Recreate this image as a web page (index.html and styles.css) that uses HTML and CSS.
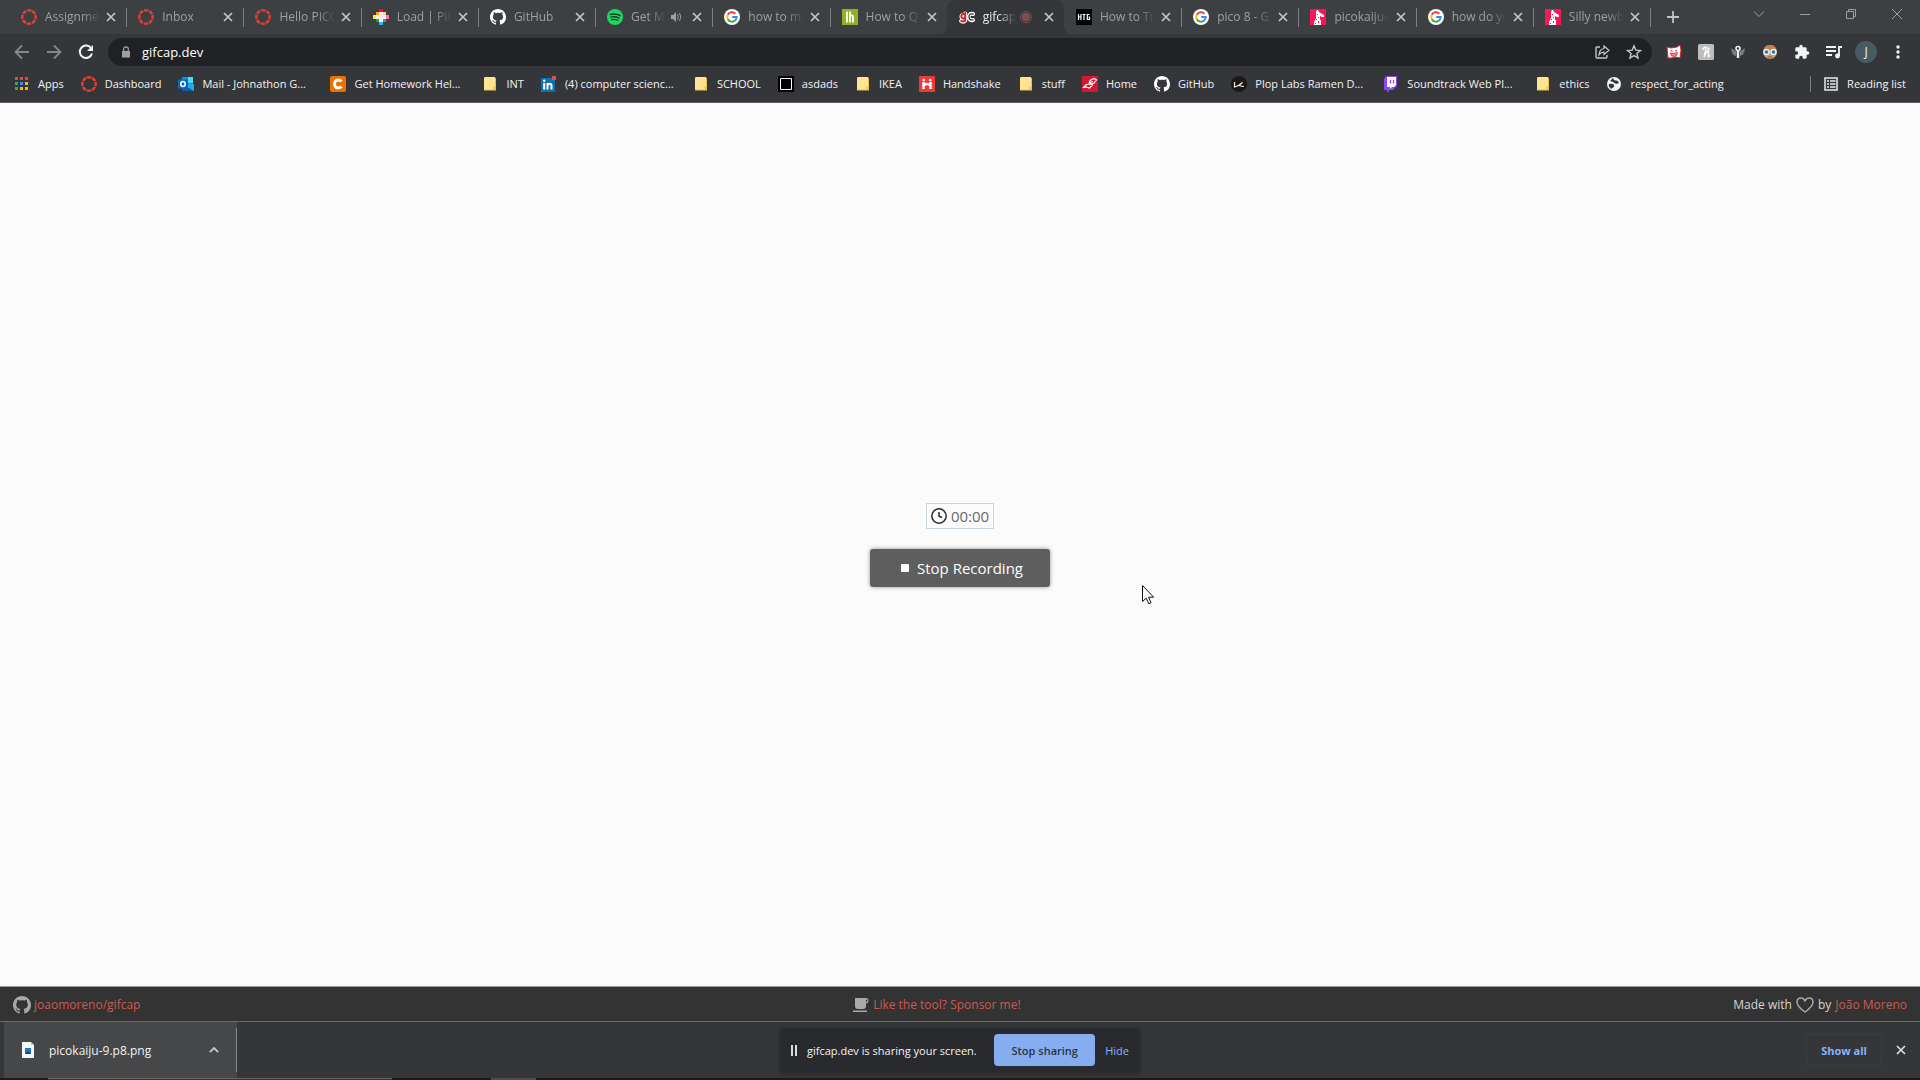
FILE: index.html
```html
<!DOCTYPE html>
<html lang="en">
<head>
<meta charset="utf-8">
<title>gifcap</title>
<link rel="stylesheet" href="styles.css">
</head>
<body>
<svg class="sprite" aria-hidden="true">
  <symbol id="close" viewBox="0 0 10 10"><path d="M1 1l8 8M9 1L1 9" stroke="currentColor" stroke-width="1.7" fill="none"/></symbol>
  <symbol id="canvas" viewBox="0 0 16 16"><circle cx="8" cy="8" r="6.7" fill="none" stroke="#e23f33" stroke-width="2.5" stroke-dasharray="4.3 .96" stroke-dashoffset="2.1"/></symbol>
  <symbol id="github" viewBox="0 0 16 16"><path fill="currentColor" d="M8 0C3.58 0 0 3.58 0 8c0 3.54 2.29 6.53 5.47 7.59.4.07.55-.17.55-.38 0-.19-.01-.82-.01-1.49-2.01.37-2.53-.49-2.69-.94-.09-.23-.48-.94-.82-1.13-.28-.15-.68-.52-.01-.53.63-.01 1.08.58 1.23.82.72 1.21 1.87.87 2.33.66.07-.52.28-.87.51-1.07-1.78-.2-3.64-.89-3.64-3.95 0-.87.31-1.59.82-2.15-.08-.2-.36-1.02.08-2.12 0 0 .67-.21 2.2.82.64-.18 1.32-.27 2-.27s1.36.09 2 .27c1.53-1.04 2.2-.82 2.2-.82.44 1.1.16 1.92.08 2.12.51.56.82 1.27.82 2.15 0 3.07-1.87 3.75-3.65 3.95.29.25.54.73.54 1.48 0 1.07-.01 1.93-.01 2.2 0 .21.15.46.55.38A8.01 8.01 0 0016 8c0-4.42-3.58-8-8-8z"/></symbol>
  <symbol id="google" viewBox="0 0 16 16"><circle cx="8" cy="8" r="8" fill="#fff"/><g fill="none" stroke-width="2"><path d="M11.4 4.7A4.8 4.8 0 0 0 3.8 5.7" stroke="#ea4335"/><path d="M3.8 5.7a4.8 4.8 0 0 0 0 4.6" stroke="#fbbc05"/><path d="M3.8 10.3a4.8 4.8 0 0 0 7.3 1.2" stroke="#34a853"/><path d="M11.1 11.5A4.8 4.8 0 0 0 12.7 8H8.2" stroke="#4285f4"/></g></symbol>
  <symbol id="giraffe" viewBox="0 0 16 16"><path fill="#fa1556" d="M0 0h16v16H0z"/><path fill="#fff" d="M7 1h1l1 2 3 2 2 1v2h-2l-2-1v3l1 2v4H4v-3l2-4V3z"/><path fill="#fa1556" d="M7 5h1v1H7zM8 8h1v1H8zM6 10h1v1H6zM8 12h1v2H8zM5 14h1v1H5z"/></symbol>
  <symbol id="folder" viewBox="0 0 16 16"><path d="M2 2q0-1 1-1h10v9h1v4H2z" fill="#ffe591"/><path d="M2 13.5h9.500V10.500H13V2l1-.2V14.500H2z" fill="#e9c14c"/></symbol>
</svg>

<div class="browser">
  <header class="tabstrip">
    <nav class="tabs" aria-label="Tabs">
      <div class="tab"><svg class="icon"><use href="#canvas"/></svg><a href="#">Assignmen</a><button class="x" aria-label="Close tab"><svg><use href="#close"/></svg></button></div>
      <div class="tab"><svg class="icon"><use href="#canvas"/></svg><a href="#">Inbox</a><button class="x" aria-label="Close tab"><svg><use href="#close"/></svg></button></div>
      <div class="tab"><svg class="icon"><use href="#canvas"/></svg><a href="#">Hello PICO</a><button class="x" aria-label="Close tab"><svg><use href="#close"/></svg></button></div>
      <div class="tab"><svg class="icon" viewBox="0 0 16 16"><path fill="#fff1e8" d="M5 3h6v2h2v6h-2v2H5v-2H3V5h2z"/><path fill="#ff004d" d="M6 0h4v3H6z"/><path fill="#ffa300" d="M3 3h3v3H3z"/><path fill="#ffec27" d="M0 6h3v4H0z"/><path fill="#00b050" d="M3 10h3v3H3z"/><path fill="#29adff" d="M6 13h4v3H6z"/><path fill="#83769c" d="M10 10h3v3h-3z"/><path fill="#ff77a8" d="M13 6h3v4h-3z"/><path fill="#ffccaa" d="M10 3h3v3h-3z"/></svg><a href="#">Load | PIC</a><button class="x" aria-label="Close tab"><svg><use href="#close"/></svg></button></div>
      <div class="tab"><svg class="icon white"><use href="#github"/></svg><a href="#">GitHub</a><button class="x" aria-label="Close tab"><svg><use href="#close"/></svg></button></div>
      <div class="tab"><svg class="icon" viewBox="0 0 16 16"><circle cx="8" cy="8" r="8" fill="#1ed760"/><g fill="none" stroke="#26352c" stroke-linecap="round"><path d="M3.300 5.500q5-1.500 9.600 1" stroke-width="1.600"/><path d="M3.800 8.200q4.500-1.200 8.200.9" stroke-width="1.300"/><path d="M4.200 10.700q3.700-.9 6.800.8" stroke-width="1.100"/></g></svg><a href="#">Get M</a><svg class="audio" viewBox="0 0 12 12"><path d="M1 4h2l3-3v10L3 8H1z" fill="currentColor"/><path d="M7.500 3.500q1.500 2.500 0 5M9.500 2q2.500 4 0 8" stroke="currentColor" fill="none"/></svg><button class="x" aria-label="Close tab"><svg><use href="#close"/></svg></button></div>
      <div class="tab"><svg class="icon"><use href="#google"/></svg><a href="#">how to ma</a><button class="x" aria-label="Close tab"><svg><use href="#close"/></svg></button></div>
      <div class="tab last-before"><svg class="icon" viewBox="0 0 16 16"><path fill="#93b023" d="M0 0h16v16H0z"/><path d="M5 2.500v11M8 2.500v11M8 7.500q0-1 1.500-1t1.500 1v6" stroke="#fff" stroke-width="1.800" fill="none"/></svg><a href="#">How to Q</a><button class="x" aria-label="Close tab"><svg><use href="#close"/></svg></button></div>
      <div class="tab active"><svg class="icon" viewBox="0 0 16 16"><g fill="none" stroke-linecap="round"><g stroke="#fff" stroke-width="4"><path d="M6 6.500a2 2 0 1 0 0 2.500M6.200 4.500v7q-1.500 2-4 .5M14 5q-4-1-4 3t4 3"/></g><path d="M6 6a2 2.200 0 1 0 0 2.500M6.200 4v7.500q-1.500 1.500-4 .5" stroke="#c22a2a" stroke-width="2"/><path d="M14 5q-4-1-4 2.800t4 3M12 8h2" stroke="#333" stroke-width="1.300"/></g></svg><a href="#">gifcap</a><svg class="rec" viewBox="0 0 12 12"><circle cx="6" cy="6" r="5.500" fill="none" stroke="#79504f" stroke-width="1"/><circle cx="6" cy="6" r="4.200" fill="#79504f"/></svg><button class="x" aria-label="Close tab"><svg><use href="#close"/></svg></button></div>
      <div class="tab"><svg class="icon" viewBox="0 0 16 16"><path d="M0 0h16v16H0z"/><path d="M2.500 5v6M5 5v6M2.500 8H5M6.500 5.500h3M8 5.500V11M13.500 5.500h-2.200v5h2.200V8H12.500" stroke="#fff" stroke-width="1.200" fill="none"/></svg><a href="#">How to Tu</a><button class="x" aria-label="Close tab"><svg><use href="#close"/></svg></button></div>
      <div class="tab"><svg class="icon"><use href="#google"/></svg><a href="#">pico 8 - G</a><button class="x" aria-label="Close tab"><svg><use href="#close"/></svg></button></div>
      <div class="tab"><svg class="icon"><use href="#giraffe"/></svg><a href="#">picokaiju-</a><button class="x" aria-label="Close tab"><svg><use href="#close"/></svg></button></div>
      <div class="tab"><svg class="icon"><use href="#google"/></svg><a href="#">how do yo</a><button class="x" aria-label="Close tab"><svg><use href="#close"/></svg></button></div>
      <div class="tab"><svg class="icon"><use href="#giraffe"/></svg><a href="#">Silly newb</a><button class="x" aria-label="Close tab"><svg><use href="#close"/></svg></button></div>
    </nav>
    <button class="new-tab" aria-label="New tab"><svg viewBox="0 0 12 12"><path d="M6 0v12M0 6h12" stroke="currentColor" stroke-width="1.800"/></svg></button>
    <div class="window-buttons">
      <button aria-label="Search tabs"><svg viewBox="0 0 12 12"><path d="M1 3.500l5 5 5-5" stroke="currentColor" fill="none"/></svg></button>
      <button aria-label="Minimize"><svg viewBox="0 0 12 12"><path d="M1 6.500h10" stroke="currentColor"/></svg></button>
      <button aria-label="Restore"><svg viewBox="0 0 12 12"><path d="M1.500 3.500h7v7h-7zM3.500 3.500v-2h7v7h-2" stroke="currentColor" fill="none"/></svg></button>
      <button aria-label="Close window"><svg viewBox="0 0 12 12"><path d="M1 1l10 10M11 1L1 11" stroke="currentColor"/></svg></button>
    </div>
  </header>

  <div class="toolbar">
    <button class="tool dim" aria-label="Back"><svg viewBox="0 0 16 16"><path d="M15 8H2M8 1.500L1.500 8 8 14.500" stroke="currentColor" stroke-width="1.800" fill="none"/></svg></button>
    <button class="tool dim" aria-label="Forward"><svg viewBox="0 0 16 16"><path d="M1 8h13M8 1.500L14.500 8 8 14.500" stroke="currentColor" stroke-width="1.800" fill="none"/></svg></button>
    <button class="tool" aria-label="Reload"><svg viewBox="0 0 16 16"><path d="M13.300 4.500A6.200 6.200 0 1 0 14 9.500" stroke="currentColor" stroke-width="2" fill="none"/><path d="M15 1v6H9z" fill="currentColor"/></svg></button>
    <div class="omnibox">
      <svg class="lock" viewBox="0 0 10 12"><path d="M1 5h8v6.500H1z" fill="currentColor"/><path d="M2.700 5V3q0-2 2.300-2t2.300 2v2" stroke="currentColor" stroke-width="1.300" fill="none"/></svg>
      <input type="text" value="gifcap.dev" aria-label="Address">
      <button class="tool light" aria-label="Share"><svg viewBox="0 0 16 16"><path d="M6 3H3Q2 3 2 4v9q0 1 1 1h9q1 0 1-1v-2" stroke="currentColor" stroke-width="1.400" fill="none"/><path d="M10 2l5 4.200-5 4.200V8Q7 8 5 10.800 5.500 5 10 4.500z" stroke="currentColor" stroke-width="1.200" fill="none"/></svg></button>
      <button class="tool light" aria-label="Bookmark this tab"><svg viewBox="0 0 16 16"><path d="M8 1.800l1.800 4.300 4.700.4-3.600 3 1.100 4.600-4-2.500-4 2.500 1.100-4.600-3.600-3 4.700-.4z" stroke="currentColor" stroke-width="1.400" fill="none"/></svg></button>
    </div>
    <button class="tool" aria-label="Comics extension"><svg viewBox="0 0 16 16"><path d="M1 3l4 1 6-1 3-2 1 5-1 8-4-1-5 1H2z" fill="#fff" stroke="#d5232b"/><path d="M4.500 6.500l2 .5M9 7l2-.5" stroke="#d5232b"/><path d="M4 9q4 1 7.500-.5-.5 4-3.500 4T4 9z" fill="#e88" stroke="#d5232b" stroke-width=".8"/></svg></button>
    <button class="tool" aria-label="Honey"><svg viewBox="0 0 16 16"><rect width="16" height="16" rx="1.500" fill="#bdbdbd"/><path d="M4.500 6q1.500-3 3-3 1 0 0 4l-1.500 6Q8.500 7 10 8t0 4q.5 1 2-.5M9 4.500Q11 3 11 5T8.500 7.500" stroke="#fff" stroke-width="1.300" fill="none"/></svg></button>
    <button class="tool" aria-label="Wings extension"><svg viewBox="0 0 16 16"><path d="M1 4l5 3v5Q1 11 1 4zM15 4l-5 3v5q5-1 5-8z" fill="#66686a"/><path d="M2 6l4 3M14 6l-4 3M3 9l3 2M13 9l-3 2" stroke="#999"/><circle cx="8" cy="4.500" r="2" stroke="#eee" stroke-width="1.600" fill="none"/><path d="M8 6v8" stroke="#eee" stroke-width="2.500"/></svg></button>
    <button class="tool" aria-label="Goggles extension"><svg viewBox="0 0 16 16"><circle cx="8" cy="8" r="7" fill="#c89a6b"/><path d="M2 5q1-4 6-4t6 4l-3 1H5z" fill="#bd8550"/><circle cx="4.500" cy="8" r="2.500" fill="#446f9c" stroke="#e8edf0" stroke-width="1.400"/><circle cx="11.500" cy="8" r="2.500" fill="#446f9c" stroke="#e8edf0" stroke-width="1.400"/><path d="M6 13h4" stroke="#8a6045"/></svg></button>
    <button class="tool" aria-label="Extensions"><svg viewBox="0 0 24 24"><path fill="currentColor" d="M20.500 11H19V7c0-1.100-.9-2-2-2h-4V3.500a2.500 2.500 0 0 0-5 0V5H4c-1.100 0-2 .9-2 2v3.800h1.500a2.700 2.700 0 0 1 0 5.400H2V20c0 1.100.9 2 2 2h3.800v-1.500a2.700 2.700 0 0 1 5.400 0V22H17c1.100 0 2-.9 2-2v-4h1.500a2.500 2.500 0 0 0 0-5z"/></svg></button>
    <button class="tool" aria-label="Media control"><svg viewBox="0 0 16 16"><path d="M0 3h10M0 7h10M0 11h6M13 12V3h3" stroke="currentColor" stroke-width="1.800" fill="none"/><circle cx="11.500" cy="12" r="2.400" fill="currentColor"/></svg></button>
    <button class="tool" aria-label="Profile"><span class="avatar">J</span></button>
    <button class="tool" aria-label="Menu"><svg viewBox="0 0 16 16"><g fill="currentColor"><circle cx="8" cy="3" r="1.700"/><circle cx="8" cy="8" r="1.700"/><circle cx="8" cy="13" r="1.700"/></g></svg></button>
  </div>

  <nav class="bookmarks" aria-label="Bookmarks">
    <a href="#"><svg class="icon" viewBox="0 0 16 16"><path fill="#e8453c" d="M1 1h3v3H1zM6 1h3v3H6zM11 1h3v3h-3z"/><path fill="#34a853" d="M1 6h3v3H1zM1 11h3v3H1z"/><path fill="#4285f4" d="M6 6h3v3H6z"/><path fill="#fbbc05" d="M11 6h3v3h-3zM6 11h3v3H6zM11 11h3v3h-3z"/></svg>Apps</a>
    <a href="#"><svg class="icon"><use href="#canvas"/></svg>Dashboard</a>
    <a href="#" class="long"><svg class="icon" viewBox="0 0 16 16"><path fill="#1490df" d="M4 1h11v7H4z"/><path fill="#50d9ff" d="M10 1h5v6h-5z"/><path fill="#28a8ea" d="M4 8h12v7H4z"/><path fill="#0f5fa8" d="M4 8l12 7H4z"/><path fill="#0a66b7" d="M0 3.500h10v9H0z"/><ellipse cx="5" cy="8" rx="2.200" ry="2.500" stroke="#fff" stroke-width="1.500" fill="none"/></svg>Mail - Johnathon G...</a>
    <a href="#" class="long"><svg class="icon" viewBox="0 0 16 16"><rect width="16" height="16" rx="2" fill="#eb7100"/><path d="M11.500 5.500Q10.500 4 8.200 4 4.500 4.200 4.500 8t3.700 4q2.300 0 3.300-1.500" stroke="#fff" stroke-width="2.800" fill="none"/></svg>Get Homework Hel...</a>
    <a href="#"><svg class="icon"><use href="#folder"/></svg>INT</a>
    <a href="#" class="long"><svg class="icon" viewBox="0 0 16 16"><path fill="#0a72b1" d="M0 2h14v14H0z"/><path d="M3.200 7v6.500M6.500 7v6.500M6.500 10q0-2.300 2-2.300t2 2.300v3.500" stroke="#fff" stroke-width="2" fill="none"/><circle cx="3.200" cy="4.700" r="1.200" fill="#fff"/><path fill="#f04a3e" d="M11 0h4v4h-4z"/></svg>(4) computer scienc...</a>
    <a href="#"><svg class="icon"><use href="#folder"/></svg>SCHOOL</a>
    <a href="#"><svg class="icon" viewBox="0 0 16 16"><path d="M0 0h16v16H0z"/><path d="M2.500 2.500h11v11h-11z" stroke="#fff" fill="none"/></svg>asdads</a>
    <a href="#"><svg class="icon"><use href="#folder"/></svg>IKEA</a>
    <a href="#"><svg class="icon" viewBox="0 0 16 16"><rect width="16" height="16" rx="1" fill="#ef3b34"/><path d="M4.500 6v7M11.500 6v7M4.500 9.500q3.500-3 7 0" stroke="#fff" stroke-width="2.400" fill="none"/><circle cx="4.800" cy="4" r="1.300" fill="#fff"/><circle cx="11.200" cy="4" r="1.300" fill="#fff"/></svg>Handshake</a>
    <a href="#"><svg class="icon"><use href="#folder"/></svg>stuff</a>
    <a href="#"><svg class="icon" viewBox="0 0 16 16"><path fill="#d5182f" d="M0 0h16v16H0z"/><path d="M1.500 11.500l3-3 4-.5 2 1-3 3-3-1zM7 7.500l1-3 4-2 2.500 1.500L12 7l-3 1-1-1.500 3-1" stroke="#fff" stroke-width="1.100" fill="none"/></svg>Home</a>
    <a href="#"><svg class="icon white"><use href="#github"/></svg>GitHub</a>
    <a href="#" class="long"><svg class="icon" viewBox="0 0 16 16"><circle cx="8" cy="8" r="8" fill="#1d1714"/><path d="M3.500 6v5q4-.5 8-4.500M8.500 9.500q2 1 4.500 1" stroke="#f0eeee" stroke-width="1.200" fill="none"/></svg>Plop Labs Ramen D...</a>
    <a href="#" class="long"><svg class="icon" viewBox="0 0 16 16"><path fill="#8b45f5" d="M1 3l2-3h11v10l-4 4H7l-2 2H4v-2H1z"/><path fill="#fff" d="M4 1h9v8l-2 2H9l-2 2v-2H4z"/><path d="M7.500 4v3.500M10.500 4v3.500" stroke="#8b45f5" stroke-width="1.300"/></svg>Soundtrack Web Pl...</a>
    <a href="#"><svg class="icon"><use href="#folder"/></svg>ethics</a>
    <a href="#"><svg class="icon" viewBox="0 0 16 16"><circle cx="8" cy="8" r="7" fill="#f1f3f4"/><path d="M3 8q4-1 5 1t-2 3l-1 1Q2 10 3 8zM7 2q1 3 3 2.500T13 7l-3 1-3-2-3-1z" fill="#35363a"/></svg>respect_for_acting</a>
    <a href="#" class="reading"><svg class="icon" viewBox="0 0 16 16"><path d="M2 2h12v12H2zM4 5h2M7 5h5.500M4 8h2M7 8h5.500M4 11h2M7 11h5.500" stroke="#e8eaed" stroke-width="1.500" fill="none"/></svg>Reading list</a>
  </nav>

  <main class="page">
    <div class="timer"><svg viewBox="0 0 16 16"><circle cx="8" cy="8" r="7.200" stroke="#24292e" stroke-width="1.500" fill="none"/><path d="M8 4v4.300l3 1.200" stroke="#24292e" stroke-width="1.500" fill="none"/></svg>00:00</div>
    <button class="stop"><span class="square"></span>Stop Recording</button>
  </main>

  <footer class="credits">
    <div><a href="#"><svg class="mark" viewBox="0 0 16 16"><use href="#github"/></svg>joaomoreno/gifcap</a></div>
    <div><a href="#" class="sponsor"><svg class="cup" viewBox="0 0 16 16"><path d="M2 1h11q2.500 0 2.500 2.500T13 6.500V9q0 3-3 3H5q-3 0-3-3zM13 2.500V5q1.200 0 1.200-1.200T13 2.500zM0 13.500h14V15H0z" fill="#a9a9a9" fill-rule="evenodd"/></svg>Like the tool? Sponsor me!</a></div>
    <div>Made with <svg class="heart" viewBox="0 0 18 16"><path d="M9 15Q1 9.500 1 5q0-4 4-4 2.500 0 4 2.800Q10.500 1 13 1q4 0 4 4 0 4.500-8 10z" stroke="#a9a9a9" stroke-width="1.500" fill="none"/></svg> by <a href="#">João Moreno</a></div>
  </footer>

  <section class="downloads" aria-label="Downloads">
    <div class="download">
      <svg class="file" viewBox="0 0 12 16"><path d="M0 0h9l3 3v13H0z" fill="#f4f6f8"/><path d="M9 0v3h3" fill="#b8bcc0"/><path d="M3 6h6v6H3z" fill="#2277c4"/><path d="M3 12l3-3 3 3z" fill="#123e70"/></svg>
      <a href="#">picokaiju-9.p8.png</a>
      <button aria-label="Download options"><svg viewBox="0 0 10 6"><path d="M.800 5.200L5 1l4.200 4.200" stroke="currentColor" stroke-width="1.800" fill="none"/></svg></button>
    </div>
    <button class="show-all">Show all</button>
    <button class="x bar-close" aria-label="Close downloads"><svg><use href="#close"/></svg></button>
  </section>
  <div class="taskbar"><span class="task-search"></span><span class="task-item"></span></div>

  <div class="sharing" role="status">
    <svg viewBox="0 0 6 11"><path d="M0 0h2v11H0zM4 0h2v11H4z" fill="#dadce0"/></svg>
    <span>gifcap.dev is sharing your screen.</span>
    <button class="stop-sharing">Stop sharing</button>
    <button class="hide">Hide</button>
  </div>
  <svg class="cursor" viewBox="0 0 13 20"><path d="M.500.500v16l3.700-3.400 2.600 5.700 2.300-1-2.600-5.600h5.200z" fill="#fff" stroke="#111"/></svg>
</div>
</body>
</html>
```
FILE: styles.css
```css
* { box-sizing: border-box; }
body {
  margin: 0;
  font-family: "Open Sans", "Noto Sans", sans-serif;
  font-size: 11px;
  color: #f1f3f4;
}
a { color: inherit; text-decoration: none; }
button {
  display: flex;
  align-items: center;
  justify-content: center;
  padding: 0;
  border: 0;
  background: none;
  color: inherit;
  font: inherit;
}
svg { display: block; flex: none; }
.sprite { position: absolute; width: 0; height: 0; }
.icon { width: 16px; height: 16px; }
.white { color: #fff; }

.browser {
  position: relative;
  display: flex;
  flex-direction: column;
  min-height: 100vh;
  overflow: hidden;
  background: #35363a;
}

/* Tab strip */
.tabstrip { display: flex; height: 34px; background: #3c4043; color: #9aa0a6; }
.tabs { display: flex; flex: 1; min-width: 0; padding-left: 9px; }
.tab {
  position: relative;
  display: flex;
  flex: 1 1 0;
  align-items: center;
  min-width: 0;
  padding: 0 8px 0 12px;
}
.tab::after {
  content: "";
  position: absolute;
  right: -1px;
  top: 8px;
  width: 1px;
  height: 19px;
  background: #7b7f83;
}
.tab.active::after, .tab.last-before::after { display: none; }
.tab a {
  flex: 1;
  min-width: 0;
  margin: 0 4px 0 8px;
  overflow: hidden;
  white-space: nowrap;
  font-size: 12px;
  line-height: 18px;
  -webkit-mask-image: linear-gradient(to left, transparent, #000 18px);
  mask-image: linear-gradient(to left, transparent, #000 18px);
}
.x { width: 14px; height: 16px; color: #c3c6ca; }
.x svg { width: 10px; height: 10px; }
.audio { width: 12px; height: 12px; margin-right: 8px; }
.rec { width: 12px; height: 12px; margin-right: 10px; }
.tab.active { background: #35363a; border-radius: 8px 8px 0 0; color: #e8eaed; }
.tab.active::before {
  content: "";
  position: absolute;
  left: -8px;
  right: -8px;
  bottom: 0;
  height: 8px;
  background:
    radial-gradient(circle at 0 0, transparent 8px, #35363a 8px) left / 8px 8px no-repeat,
    radial-gradient(circle at 100% 0, transparent 8px, #35363a 8px) right / 8px 8px no-repeat;
}
.new-tab { width: 46px; color: #bdc1c6; }
.new-tab svg { width: 12px; height: 12px; }
.window-buttons { display: flex; margin-left: 40px; }
.window-buttons button { width: 46px; height: 28px; }
.window-buttons svg { width: 12px; height: 12px; }

/* Toolbar */
.toolbar { display: flex; align-items: center; height: 36px; padding: 0 6px; }
.tool { flex: none; width: 32px; height: 28px; }
.tool svg { width: 16px; height: 16px; }
.dim { color: #84888c; }
.light { color: #c4c7ca; }
.omnibox {
  display: flex;
  flex: 1;
  align-items: center;
  height: 28px;
  margin: 0 6px;
  padding: 0 2px 0 13px;
  border-radius: 14px;
  background: #202124;
}
.lock { width: 10px; height: 12px; color: #9aa0a6; }
.omnibox input {
  flex: 1;
  min-width: 0;
  margin-left: 11px;
  padding: 0;
  border: 0;
  outline: 0;
  background: none;
  color: #fff;
  font: 13px/20px "Open Sans", "Noto Sans", sans-serif;
}
.avatar {
  width: 22px;
  height: 22px;
  border-radius: 50%;
  background: #455a64;
  font-size: 12px;
  line-height: 22px;
}

/* Bookmarks */
.bookmarks {
  display: flex;
  align-items: center;
  gap: 17px;
  height: 33px;
  padding: 0 14px 4px;
  border-bottom: 1px solid #606164;
  white-space: nowrap;
}
.bookmarks a { display: flex; flex: none; align-items: center; gap: 8px; line-height: 16px; }
.bookmarks .long { width: 135px; }
.bookmarks .reading { margin-left: auto; padding-left: 12px; border-left: 1px solid #7b7f83; }

/* Page */
.page {
  display: flex;
  flex: 1;
  flex-direction: column;
  align-items: center;
  justify-content: center;
  gap: 20px;
  background: #fbfbfb;
}
.timer {
  display: flex;
  align-items: center;
  gap: 4px;
  height: 26px;
  padding: 0 4px;
  border: 1px solid #c9d6de;
  color: #6a6a6a;
  font-size: 15px;
  line-height: 24px;
}
.timer svg { width: 16px; height: 16px; }
.stop {
  gap: 8px;
  width: 180px;
  height: 38px;
  padding-left: 4px;
  border-radius: 3px;
  background: #5e5e5e;
  box-shadow: 0 0 4px rgba(0, 0, 0, 0.4);
  color: #fff;
  font-size: 15px;
}
.square { width: 8px; height: 8px; border-radius: 1px; background: #fff; }

/* Page footer */
.credits {
  display: flex;
  align-items: center;
  justify-content: space-between;
  height: 36px;
  padding: 2px 13px 0;
  border-top: 1px solid #9b9b9b;
  border-bottom: 1px solid #68696b;
  background: #333;
  color: #d5d5d5;
  font-size: 12px;
  line-height: 20px;
}
.credits div { display: flex; align-items: center; gap: 4px; }
.credits a { display: flex; align-items: center; gap: 3px; color: #cc5a54; }
.credits .sponsor { gap: 4px; }
.mark { width: 18px; height: 18px; color: #a9a9a9; }
.cup { width: 16px; height: 16px; }
.heart { width: 18px; height: 16px; }

/* Downloads */
.downloads { display: flex; align-items: center; height: 56px; padding: 0 12px 0 4px; }
.download {
  position: relative;
  display: flex;
  align-items: center;
  width: 233px;
  height: 56px;
  padding: 0 18px;
  background: #464749;
}
.download::after {
  content: "";
  position: absolute;
  right: 0;
  top: 6px;
  width: 1px;
  height: 44px;
  background: #87898b;
}
.file { width: 12px; height: 16px; }
.download a { flex: 1; margin-left: 15px; font-size: 12px; }
.download button { width: 10px; height: 20px; color: #c3c6ca; }
.download button svg { width: 10px; height: 6px; }
.show-all {
  width: 76px;
  height: 32px;
  margin-left: auto;
  border: 1px solid #3c3d40;
  border-radius: 4px;
  color: #8ab4f8;
  font-weight: 700;
}
.bar-close { margin-left: 12px; color: #dadce0; }
.taskbar { display: flex; height: 2px; padding-left: 48px; background: #1e1a1b; }
.task-search { width: 344px; border-top: 1px solid #666; background: #353233; }
.task-item { width: 45px; margin-left: 99px; background: #4e4c4e; }

/* Screen sharing notice, floating over the downloads bar */
.sharing {
  position: absolute;
  left: 50%;
  bottom: 8px;
  display: flex;
  align-items: center;
  width: 360px;
  height: 44px;
  padding: 0 11px;
  background: #292a2d;
  box-shadow: 0 1px 4px rgba(0, 0, 0, 0.3);
  transform: translateX(-50%);
  white-space: nowrap;
}
.sharing svg { width: 6px; height: 11px; }
.sharing span { flex: 1; margin-left: 10px; }
.stop-sharing {
  width: 101px;
  height: 32px;
  margin-right: 10px;
  border-radius: 4px;
  background: #85adf0;
  color: #2b3340;
  font-weight: 600;
}
.hide { color: #8ab4f8; }

/* Mouse pointer */
.cursor { position: absolute; left: 1142px; top: 585px; width: 13px; height: 20px; }
```
